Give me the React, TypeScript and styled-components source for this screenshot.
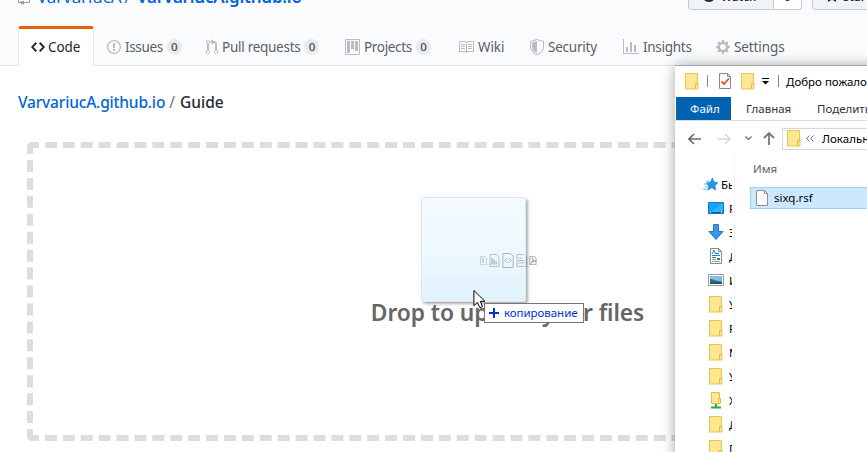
import React from "react";
import styled, { createGlobalStyle, css } from "styled-components";

const GlobalStyle = createGlobalStyle`
  *, *::before, *::after { box-sizing: border-box; }
  html, body { margin: 0; height: 100%; overflow: hidden; background: #fff; }
  body { font-family: "Noto Sans", "Open Sans", sans-serif; color: #24292e; }
  svg { display: block; flex: none; }
`;

const Screen = styled.div`
  position: relative;
  width: 867px;
  height: 452px;
  overflow: hidden;
  background: #fff;
`;

const Label = styled.span<{ $ls?: number }>`
  white-space: pre;
  letter-spacing: ${(p) => p.$ls ?? 0}px;
`;

/* ---------- repository header ---------- */

const RepoHead = styled.header`
  height: 66px;
  background: #fafbfc;
  border-bottom: 1px solid #e1e4e8;
  display: flex;
  flex-direction: column;
`;

const TitleRow = styled.div`
  height: 26px;
  flex: none;
  padding-left: 18px;
  display: flex;
  align-items: flex-start;
  overflow: hidden;
`;

const RepoIcon = styled.div`
  width: 12px;
  flex: none;
  margin: -11px 7px 0 0;
  color: #959da5;
`;

const RepoTitle = styled.h1`
  margin: -17px 0 0;
  width: 651px;
  flex: none;
  font-size: 17px;
  line-height: 27px;
  font-weight: 400;
  color: #0366d6;
  white-space: pre;
  letter-spacing: -0.1px;
  b { font-weight: 600; letter-spacing: -0.22px; }
  i { font-style: normal; color: #586069; padding: 0 6px 0 3px; }
`;

const Buttons = styled.div`
  display: flex;
  margin-top: -18px;
`;

const HeadButton = styled.div<{ $w: number; $count?: boolean; $gap?: number }>`
  width: ${(p) => p.$w}px;
  height: 28px;
  flex: none;
  margin-right: ${(p) => p.$gap ?? 0}px;
  padding-left: ${(p) => (p.$count ? 10 : 12)}px;
  display: flex;
  align-items: center;
  gap: 4px;
  font-size: 11.5px;
  font-weight: 600;
  border: 1px solid #c5c9cd;
  border-radius: ${(p) => (p.$count ? "0 3px 3px 0" : "3px 0 0 3px")};
  background: ${(p) => (p.$count ? "#fff" : "linear-gradient(#fafbfc, #eff3f6 90%)")};
  ${(p) => p.$count && css`border-left: 0;`}
`;

const TabBar = styled.nav`
  display: flex;
  height: 40px;
  padding-left: 18px;
`;

const Tab = styled.a<{ $w: number; $active?: boolean }>`
  width: ${(p) => p.$w}px;
  height: ${(p) => (p.$active ? 40 : 39)}px;
  flex: none;
  display: flex;
  align-items: center;
  padding: 0 0 ${(p) => (p.$active ? 2 : 0)}px 12px;
  border: 1px solid transparent;
  border-top: 3px solid transparent;
  border-radius: 3px 3px 0 0;
  font-size: 13.5px;
  line-height: 20px;
  color: #586069;
  svg { color: #babdc0; margin-right: 4px; }
  ${(p) => p.$active && css`
    background: #fff;
    color: #24292e;
    border-color: #e36209 #e1e4e8 transparent;
    border-bottom: 0;
    svg { color: #24292e; margin-right: 3px; }
  `}
`;

const Counter = styled.span`
  margin-left: 4px;
  width: 15px;
  height: 16px;
  border-radius: 8px;
  background: #e8eaec;
  color: #444d56;
  font-size: 11.5px;
  font-weight: 500;
  line-height: 16px;
  text-align: center;
`;

/* ---------- page body ---------- */

const Crumbs = styled.div`
  height: 76px;
  padding: 25px 0 0 18px;
  font-size: 15.5px;
  line-height: 22px;
  font-weight: 500;
  color: #24292e;
  display: flex;
  a { color: #0366d6; }
  i { font-style: normal; font-weight: 400; color: #6a737d; padding: 0 5px 0 4px; }
`;

const DropZone = styled.section`
  margin-left: 27px;
  width: 961px;
  height: 299px;
  border: 6px dashed #ddd;
  border-radius: 5px;
  display: flex;
  flex-direction: column;
  align-items: center;
`;

const FileIcons = styled.div`
  margin-top: 102px;
  height: 20px;
  display: flex;
  align-items: center;
  gap: 2px;
  margin-left: 1px;
  color: #6c6c6c;
`;

const DropText = styled.h2`
  margin: 27px 0 0;
  font-size: 22.8px;
  line-height: 32px;
  font-weight: 600;
  color: #666;
`;

const DragTile = styled.div`
  position: absolute;
  left: 421px;
  top: 197px;
  width: 105px;
  height: 105px;
  border: 1px solid #cfe8f3;
  border-radius: 3px;
  background: linear-gradient(rgba(230, 247, 253, 0.5), rgba(218, 241, 254, 0.5) 60%, rgba(190, 228, 248, 0.5));
  box-shadow: inset 0 0 0 1px rgba(255, 255, 255, 0.4), 2px 2px 3px rgba(0, 0, 0, 0.32);
`;

const CopyHint = styled.div`
  position: absolute;
  left: 484px;
  top: 303px;
  width: 100px;
  height: 20px;
  border: 1px solid #767676;
  background: #fff;
  color: #0033cc;
  display: flex;
  align-items: center;
  gap: 5px;
  padding: 0 0 1px 4px;
  font-size: 11.5px;
`;

const Pointer = styled.svg`
  position: absolute;
  left: 473px;
  top: 289px;
`;

/* ---------- file manager window ---------- */

const Window = styled.aside`
  position: absolute;
  left: 675px;
  top: 65px;
  width: 400px;
  height: 500px;
  background: #fff;
  border-top: 1px solid #a6a6a6;
  box-shadow: 0 1px 13px rgba(0, 0, 0, 0.36);
  font-size: 11.5px;
  color: #000;
  display: flex;
  flex-direction: column;
`;

const TitleBar = styled.div`
  height: 31px;
  flex: none;
  display: flex;
  align-items: center;
  padding: 0 0 1px 10px;
`;

const Divider = styled.span<{ $l: number; $r: number }>`
  width: 1px;
  height: 12px;
  margin: 0 ${(p) => p.$r}px 1px ${(p) => p.$l}px;
  background: #888;
`;

const QuickIcon = styled.span<{ $r: number }>`
  margin-right: ${(p) => p.$r}px;
`;

const Ribbon = styled.div`
  height: 24px;
  flex: none;
  display: flex;
  border-bottom: 1px solid #dcdddd;
  line-height: 24px;
  color: #333;
`;

const RibbonTab = styled.span<{ $w: number; $file?: boolean; $pad: number; $ls?: number }>`
  width: ${(p) => p.$w}px;
  height: 23px;
  padding-left: ${(p) => p.$pad}px;
  letter-spacing: ${(p) => p.$ls ?? 0}px;
  white-space: nowrap;
  ${(p) => p.$file && css`
    width: 56px;
    border-left: 1px solid #fff;
    background: #0063b1;
    color: #fff;
  `}
`;

const AddressRow = styled.div`
  height: 35px;
  flex: none;
  display: flex;
  align-items: center;
  padding-left: 13px;
`;

const NavGlyph = styled.span<{ $r: number }>`
  margin-right: ${(p) => p.$r}px;
`;

const AddressBox = styled.div`
  width: 300px;
  height: 22px;
  flex: none;
  border: 1px solid #d9d9d9;
  display: flex;
  align-items: center;
  padding-left: 4px;
`;

const Chevrons = styled.span`
  width: 16px;
  margin-left: 5px;
  svg { color: #666; }
`;

const Panes = styled.div`
  flex: 1;
  display: flex;
`;

const Tree = styled.div`
  width: 60px;
  padding: 16px 2px 0 27px;
  border-right: 1px solid #f0f0f0;
  display: flex;
  flex-direction: column;
  overflow: hidden;
`;

const TreeRow = styled.div<{ $root?: boolean }>`
  height: 24px;
  flex: none;
  display: flex;
  align-items: center;
  padding-left: ${(p) => (p.$root ? 0 : 6)}px;
  overflow: hidden;
  span { flex: none; margin-left: ${(p) => (p.$root ? 3 : 5)}px; }
`;

const IconCell = styled.div`
  width: 16px;
  height: 17px;
  flex: none;
  display: flex;
  align-items: center;
  justify-content: center;
`;

const Files = styled.div`
  flex: 1;
  padding-left: 15px;
`;

const ColumnHead = styled.div`
  height: 31px;
  padding-left: 3px;
  line-height: 26px;
  color: #5a6478;
`;

const FileRow = styled.div`
  height: 22px;
  border: 1px solid #99d1ff;
  background: #cce8ff;
  display: flex;
  align-items: center;
  padding: 0 0 1px 5px;
  gap: 6px;
`;

/* ---------- drawings ---------- */

const Oct = ({ d, w, even }: { d: string; w: number; even?: boolean }) => (
  <svg width={w} height={16} viewBox={`0 0 ${w} 16`} fill="currentColor">
    <path d={d} fillRule={even ? "evenodd" : undefined} />
  </svg>
);

const Folder = () => (
  <svg width={14} height={17} viewBox="0 0 14 17">
    <path d="M.5.5h12v9.500h.5v6H.5z" fill="#ffe692" stroke="#e8c550" />
    <path d="M10.500 16V10.500h2.500" fill="#ffe07a" stroke="#e3bb3e" />
  </svg>
);

const Page = ({ w, h, children }: { w: number; h: number; children?: React.ReactNode }) => (
  <svg width={w} height={h} viewBox="0 0 12 16" fill="none" stroke="currentColor" strokeWidth="1">
    <path d="M.5.5h8l3 3v12H.5z" />
    {children}
  </svg>
);

const ICONS = {
  repo: "M4 9H3V8h1v1zm0-3H3v1h1V6zm0-2H3v1h1V4zm0-2H3v1h1V2zm8-1v12c0 .55-.45 1-1 1H6v2l-1.500-1.500L3 16v-2H1c-.55 0-1-.45-1-1V1c0-.55.45-1 1-1h10c.55 0 1 .45 1 1zm-1 10H1v2h2v-1h3v1h5v-2zm0-10H2v9h9V1z",
  code: "M9.500 3L8 4.500 11.500 8 8 11.500 9.500 13 14 8 9.500 3zm-5 0L0 8l4.500 5L6 11.500 2.500 8 6 4.500 4.500 3z",
  issue: "M7 2.300c3.140 0 5.700 2.560 5.700 5.700s-2.560 5.700-5.700 5.700A5.710 5.710 0 0 1 1.300 8c0-3.140 2.560-5.700 5.700-5.700zM7 1C3.140 1 0 4.140 0 8s3.140 7 7 7 7-3.140 7-7-3.140-7-7-7zm1 3H6v5h2V4zm0 6H6v2h2v-2z",
  pull: "M11 11.280V5c-.03-.78-.34-1.470-.94-2.060C9.460 2.350 8.780 2.030 8 2H7V0L4 3l3 3V4h1c.27.02.48.11.69.31.21.2.3.42.31.69v6.280A1.993 1.993 0 0 0 10 15a1.993 1.993 0 0 0 1-3.720zm-1 2.920c-.66 0-1.200-.55-1.200-1.200 0-.65.55-1.200 1.200-1.200.65 0 1.200.55 1.200 1.200 0 .65-.55 1.200-1.200 1.200zM4 3c0-1.110-.89-2-2-2a1.993 1.993 0 0 0-1 3.720v6.560A1.993 1.993 0 0 0 2 15a1.993 1.993 0 0 0 1-3.720V4.720c.59-.34 1-.98 1-1.720zm-.8 10c0 .66-.55 1.200-1.200 1.200-.65 0-1.200-.55-1.200-1.200 0-.65.55-1.200 1.200-1.200.65 0 1.200.55 1.200 1.200zM2 4.200C1.340 4.200.8 3.650.8 3c0-.65.55-1.200 1.200-1.200.65 0 1.200.55 1.200 1.200 0 .65-.55 1.200-1.200 1.200z",
  project: "M10 12h3V2h-3v10zm-4-2h3V2H6v8zm-4 4h3V2H2v12zm-1 1h13V1H1v14zM14 0H1a1 1 0 0 0-1 1v14a1 1 0 0 0 1 1h13a1 1 0 0 0 1-1V1a1 1 0 0 0-1-1z",
  book: "M3 5h4v1H3V5zm0 3h4V7H3v1zm0 2h4V9H3v1zm11-5h-4v1h4V5zm0 2h-4v1h4V7zm0 2h-4v1h4V9zm2-6v9c0 .55-.45 1-1 1H9.500l-1 1-1-1H2c-.55 0-1-.45-1-1V3c0-.55.45-1 1-1h5.500l1 1 1-1H15c.55 0 1 .45 1 1zm-8 .5L7.500 3H2v9h6V3.500zm7-.5H9.500l-.5.5V12h6V3z",
  shield: "M0 2l7-2 7 2v6.020C14 12.690 8.690 16 7 16c-1.690 0-7-3.310-7-7.980V2zm1 .75L7 1l6 1.750v5.268C13 12.104 8.449 15 7 15c-1.449 0-6-2.896-6-6.982V2.750zm1 .75L7 2v12c-1.207 0-5-2.482-5-5.985V3.500z",
  graph: "M16 14v1H0V0h1v14h15zM5 13H3V8h2v5zm4 0H7V3h2v10zm4 0h-2V6h2v7z",
  gear: "M14 8.770v-1.600l-1.940-.64-.45-1.090.88-1.840-1.130-1.130-1.810.91-1.090-.45-.69-1.920h-1.600l-.63 1.940-1.110.45-1.840-.88-1.130 1.130.91 1.810-.45 1.090L0 7.230v1.590l1.940.64.45 1.090-.88 1.840 1.130 1.130 1.810-.91 1.090.45.69 1.920h1.590l.63-1.940 1.110-.45 1.840.88 1.130-1.130-.92-1.810.47-1.090L14 8.750v.02zM7 11c-1.660 0-3-1.340-3-3s1.340-3 3-3 3 1.340 3 3-1.340 3-3 3z",
  eye: "M8.060 2C3 2 0 8 0 8s3 6 8.060 6C13 14 16 8 16 8s-3-6-7.940-6zM8 12c-2.200 0-4-1.780-4-4 0-2.200 1.800-4 4-4 2.220 0 4 1.800 4 4 0 2.220-1.780 4-4 4zm2-4c0 1.110-.89 2-2 2-1.110 0-2-.89-2-2 0-1.110.89-2 2-2 1.110 0 2 .89 2 2z",
  star: "M14 6l-4.900-.64L7 1 4.900 5.360 0 6l3.600 3.260L2.670 14 7 11.670 11.330 14l-.93-4.740L14 6z",
};

const TABS = [
  { name: "Code", icon: ICONS.code, iw: 14, w: 76, ls: -0.1 },
  { name: "Issues", icon: ICONS.issue, iw: 14, w: 99, ls: -0.35, count: 0 },
  { name: "Pull requests", icon: ICONS.pull, iw: 12, w: 139, ls: -0.27, count: 0 },
  { name: "Projects", icon: ICONS.project, iw: 15, w: 113, ls: -0.33, count: 0, even: true },
  { name: "Wiki", icon: ICONS.book, iw: 16, w: 72, ls: -0.1 },
  { name: "Security", icon: ICONS.shield, iw: 14, w: 93, ls: -0.22, even: true },
  { name: "Insights", icon: ICONS.graph, iw: 16, w: 93, ls: -0.28 },
  { name: "Settings", icon: ICONS.gear, iw: 14, w: 93, ls: -0.1 },
];

const StarIcon = () => (
  <svg width="15" height="13" viewBox="0 0 16 14">
    <path d="M10 0l1.700 4.300L16 5l-3.300 3 .8 5-4-2.500L5 13l1.200-4.500L3.500 5.500l4.500-.8z" fill="#1b9be8" stroke="#1177bd" strokeWidth=".7" />
    <path d="M3 3.500h4M1 6.500h4M2 9.500h3M0 12h4" stroke="#58b5ec" />
  </svg>
);
const DesktopIcon = () => (
  <svg width="16" height="12" viewBox="0 0 16 12">
    <path d="M.5.500h15v11H.5z" fill="#18a1fa" stroke="#0879c9" />
    <path d="M1 11L15 1v10z" fill="#35b2ff" />
    <path d="M1 10.500h14" stroke="#075c9d" />
    <path d="M2 10.500h1m10 0h1" stroke="#fff" />
  </svg>
);
const DownIcon = () => (
  <svg width="16" height="16" viewBox="0 0 16 16">
    <path d="M5.500.500h5v7h4.500L8 15.500 1 7.500h4.500z" fill="#3897e6" stroke="#2377c6" />
  </svg>
);
const DocIcon = () => (
  <svg width="12" height="16" viewBox="0 0 12 16">
    <path d="M.5.500h8l3 3v12H.5z" fill="#fff" stroke="#8a8a8a" />
    <path d="M8.500.500v3h3" fill="none" stroke="#8a8a8a" />
    <path d="M2 6l2-4 1.500 4M6 5.500h3M2 7.500h8M2 9.500h4" fill="none" stroke="#1d83cf" />
    <path d="M7 10h3v2H7z" fill="#3a7d94" />
    <path d="M2 11.500h4M2 13.500h8" stroke="#a0a0a0" />
  </svg>
);
const ImageIcon = () => (
  <svg width="16" height="12" viewBox="0 0 16 12">
    <path d="M.5.500h15v11H.5z" fill="#fff" stroke="#999" />
    <path d="M2 2h12v8H2z" fill="#7fbdf5" />
    <path d="M2 5c3 0 6 2 12 2.500V10H2z" fill="#3c755f" />
    <path d="M2 8.500l12-.5v2H2z" fill="#254f70" />
  </svg>
);
const NetworkFolder = () => (
  <svg width="10" height="17" viewBox="0 0 10 17">
    <path d="M.5.500h8v6h1v5h-9z" fill="#ffe793" stroke="#e3bd48" />
    <path d="M7.500 11V6.500h1" fill="none" stroke="#e3bb3e" />
    <path d="M5 12v3M0 15.500h10" stroke="#29a83a" strokeWidth="2" />
  </svg>
);

const TREE: { icon: React.ReactNode; text: string }[] = [
  { icon: <StarIcon />, text: "Быстрый доступ" },
  { icon: <DesktopIcon />, text: "Рабочий стол" },
  { icon: <DownIcon />, text: "Загрузки" },
  { icon: <DocIcon />, text: "Документы" },
  { icon: <ImageIcon />, text: "Изображения" },
  { icon: <Folder />, text: "У" },
  { icon: <Folder />, text: "Р" },
  { icon: <Folder />, text: "М" },
  { icon: <Folder />, text: "У" },
  { icon: <NetworkFolder />, text: "Х" },
  { icon: <Folder />, text: "Д" },
  { icon: <Folder />, text: "П" },
];

const Arrow = ({ color, flip }: { color: string; flip?: boolean }) => (
  <svg width="13" height="12" viewBox="0 0 13 12" fill="none" stroke={color} strokeWidth="1.700">
    <path d={flip ? "M0 6h12M7 1l5 5-5 5" : "M13 6H1M6 1L1 6l5 5"} />
  </svg>
);

export default function App() {
  return (
    <Screen>
      <GlobalStyle />
      <RepoHead>
        <TitleRow>
          <RepoIcon><Oct d={ICONS.repo} w={12} /></RepoIcon>
          <RepoTitle>VarvariucA<i>/</i><b>VarvariucA.github.io</b></RepoTitle>
          <Buttons>
            <HeadButton $w={86}><Oct d={ICONS.eye} w={16} /><Label>Watch</Label></HeadButton>
            <HeadButton $w={28} $count $gap={10}>0</HeadButton>
            <HeadButton $w={80}><Oct d={ICONS.star} w={14} /><Label>Star</Label></HeadButton>
          </Buttons>
        </TitleRow>
        <TabBar>
          {TABS.map((t, i) => (
            <Tab key={t.name} $w={t.w} $active={i === 0}>
              <Oct d={t.icon} w={t.iw} even={t.even} />
              <Label $ls={t.ls}>{t.name}</Label>
              {t.count !== undefined && <Counter>{t.count}</Counter>}
            </Tab>
          ))}
        </TabBar>
      </RepoHead>

      <Crumbs>
        <a><Label $ls={-0.18}>VarvariucA.github.io</Label></a>
        <i>/</i>
        <Label $ls={0}>Guide</Label>
      </Crumbs>

      <DropZone>
        <FileIcons>
          <Page w={7} h={9}><path d="M4 3v9M6 4v9" /></Page>
          <Page w={11} h={13}><path d="M3 13V5M5.500 13V7M8 13V9" strokeWidth="1.500" /></Page>
          <Page w={12} h={15}><path d="M5 5.500L2.500 8 5 10.500M7 5.500L9.500 8 7 10.500" /></Page>
          <Page w={11} h={13}><path d="M2 5h5M2 8h8M2 11h8" /></Page>
          <Page w={8} h={9}><path d="M2 13c5-5 4-8 3-10 0 5 3 6 6 6-4 0-7 2-9 4" /></Page>
        </FileIcons>
        <DropText><Label $ls={-0.08}>Drop to upload your files</Label></DropText>
      </DropZone>

      <DragTile />
      <CopyHint>
        <svg width="10" height="10" viewBox="0 0 10 10"><path d="M5 0v10M0 5h10" stroke="#0033cc" strokeWidth="2" /></svg>
        <Label $ls={-0.05}>копирование</Label>
      </CopyHint>
      <Pointer width="13" height="20" viewBox="0 0 13 20">
        <path d="M.9 1.500v15.200l3.500-3.400 2.500 5.400 2.600-1.100L7.200 12.300h4.700z" fill="#fff" stroke="#000" />
      </Pointer>

      <Window>
        <TitleBar>
          <QuickIcon $r={0}><Folder /></QuickIcon>
          <Divider $l={8} $r={11} />
          <QuickIcon $r={10}>
            <svg width="12" height="16" viewBox="0 0 12 16">
              <path d="M.5.500h8l3 3v12H.5z" fill="#f8f8f8" stroke="#8a8a8a" />
              <path d="M8.500.500v3h3" fill="none" stroke="#8a8a8a" />
              <path d="M2.500 8.500L5 11l5-5.500" fill="none" stroke="#e8501d" strokeWidth="1.800" />
            </svg>
          </QuickIcon>
          <QuickIcon $r={7}><Folder /></QuickIcon>
          <svg width="7" height="7" viewBox="0 0 7 7"><path d="M0 .5h7" stroke="#000" /><path d="M0 3h7L3.500 6.500z" /></svg>
          <Divider $l={9} $r={7} />
          <Label>Добро пожаловать</Label>
        </TitleBar>
        <Ribbon>
          <RibbonTab $file $w={56} $pad={14}>Файл</RibbonTab>
          <RibbonTab $w={71} $pad={15}>Главная</RibbonTab>
          <RibbonTab $w={100} $pad={15}>Поделиться</RibbonTab>
        </Ribbon>
        <AddressRow>
          <NavGlyph $r={17}><Arrow color="#6c6c6c" /></NavGlyph>
          <NavGlyph $r={14}><Arrow color="#dadada" flip /></NavGlyph>
          <NavGlyph $r={11}>
            <svg width="7" height="5" viewBox="0 0 7 5" fill="none" stroke="#777" strokeWidth="1.500"><path d="M.5.500l3 3 3-3" /></svg>
          </NavGlyph>
          <NavGlyph $r={7}>
            <svg width="12" height="13" viewBox="0 0 12 13" fill="none" stroke="#777" strokeWidth="1.800"><path d="M6 13V1M1 6l5-5 5 5" /></svg>
          </NavGlyph>
          <AddressBox>
            <Folder />
            <Chevrons>
              <svg width="8" height="7" viewBox="0 0 8 7" fill="none" stroke="currentColor"><path d="M3.500.500l-3 3 3 3M7.500.500l-3 3 3 3" /></svg>
            </Chevrons>
            <Label>Локальный диск</Label>
          </AddressBox>
        </AddressRow>
        <Panes>
          <Tree>
            {TREE.map((n, i) => (
              <TreeRow key={i} $root={i === 0}>
                <IconCell>{n.icon}</IconCell>
                <Label>{n.text}</Label>
              </TreeRow>
            ))}
          </Tree>
          <Files>
            <ColumnHead>Имя</ColumnHead>
            <FileRow>
              <svg width="12" height="16" viewBox="0 0 12 16">
                <path d="M.5.500h8l3 3v12H.5z" fill="#fafafa" stroke="#8f8f8f" />
                <path d="M8.500.500v3h3" fill="none" stroke="#8f8f8f" />
              </svg>
              <Label>sixq.rsf</Label>
            </FileRow>
          </Files>
        </Panes>
      </Window>
    </Screen>
  );
}
